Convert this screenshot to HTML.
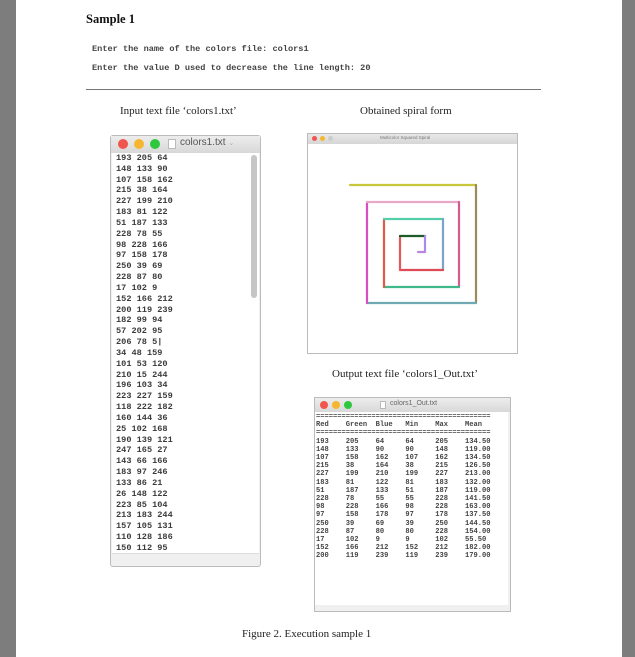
<!DOCTYPE html>
<html><head><meta charset="utf-8">
<style>
*{margin:0;padding:0;box-sizing:border-box}
body{width:635px;height:657px;background:#7d7d7d;position:relative;overflow:hidden;font-family:"Liberation Serif",serif}
.page{position:absolute;left:16px;top:0;width:606px;height:657px;background:#fff}
.a{position:absolute;white-space:pre}
.mono{font-family:"Liberation Mono","DejaVu Sans Mono",monospace;color:#333}
.cap{font-size:11px;color:#222}
.dot{position:absolute;border-radius:50%}
</style></head><body>
<div class="page"></div>
<div class="a" style="left:86px;top:12px;font-size:12.5px;font-weight:bold;color:#111">Sample 1</div>
<div class="a mono" style="left:92px;top:44px;font-size:8.6px;font-weight:bold;color:#444">Enter the name of the colors file: colors1</div>
<div class="a mono" style="left:92px;top:63px;font-size:8.6px;font-weight:bold;color:#444">Enter the value D used to decrease the line length: 20</div>
<div class="a" style="left:86px;top:89px;width:455px;height:1px;background:#777"></div>
<div class="a cap" style="left:120px;top:105px">Input text file ‘colors1.txt’</div>
<div class="a cap" style="left:360px;top:105px">Obtained spiral form</div>

<!-- left window -->
<div class="a" style="left:110px;top:135px;width:151px;height:432px;border:1px solid #bbb;background:#f0f0f0;border-radius:3px"></div>
<div class="a" style="left:111px;top:136px;width:149px;height:17px;background:linear-gradient(#ededed,#d8d8d8)"></div>
<div class="dot" style="left:118px;top:139px;width:10px;height:10px;background:#f0554f"></div>
<div class="dot" style="left:134px;top:139px;width:10px;height:10px;background:#f5b731"></div>
<div class="dot" style="left:150px;top:139px;width:10px;height:10px;background:#2ec840"></div>
<div class="a" style="left:168px;top:139px;width:8px;height:10px;border:1px solid #bbb;background:#fff"></div>
<div class="a" style="left:180px;top:137px;font-family:'Liberation Sans',sans-serif;font-size:10px;color:#555">colors1.txt <span style="color:#aaa;font-size:7px">⌄</span></div>
<div class="a" style="left:112px;top:153px;width:147px;height:401px;background:#fff;border-bottom:1px solid #ddd"></div>
<div class="a" style="left:251px;top:155px;width:6px;height:143px;background:#c6c6c6;border-radius:3px"></div>
<div class="a mono" style="left:116px;top:153px;font-size:8.6px;line-height:10.83px;font-weight:bold;color:#3a3a3a">193 205 64
148 133 90
107 158 162
215 38 164
227 199 210
183 81 122
51 187 133
228 78 55
98 228 166
97 158 178
250 39 69
228 87 80
17 102 9
152 166 212
200 119 239
182 99 94
57 202 95
206 78 5|
34 48 159
101 53 120
210 15 244
196 103 34
223 227 159
118 222 182
160 144 36
25 102 168
190 139 121
247 165 27
143 66 166
183 97 246
133 86 21
26 148 122
223 85 104
213 183 244
157 105 131
110 128 186
150 112 95</div>

<!-- spiral window -->
<div class="a" style="left:307px;top:133px;width:211px;height:221px;border:1px solid #bbb;background:#fff"></div>
<div class="a" style="left:308px;top:134px;width:209px;height:10px;background:linear-gradient(#e8e8e8,#d6d6d6)"></div>
<div class="dot" style="left:312px;top:136px;width:5px;height:5px;background:#f0554f"></div>
<div class="dot" style="left:320px;top:136px;width:5px;height:5px;background:#f5b731"></div>
<div class="dot" style="left:328px;top:136px;width:5px;height:5px;background:#ccc"></div>
<div class="a" style="left:380px;top:135px;font-family:'Liberation Sans',sans-serif;font-size:4.5px;color:#777">Multicolor Squared Spiral</div>
<svg class="a" style="left:0;top:0" width="635" height="657" fill="none" stroke-width="2.2" stroke-linecap="round">
<line x1="350" y1="185" x2="476" y2="185" stroke="#c8c63a"/>
<line x1="476" y1="185" x2="476" y2="303" stroke="#9c8a5c"/>
<line x1="476" y1="303" x2="367" y2="303" stroke="#6fa9b4"/>
<line x1="367" y1="303" x2="367" y2="202" stroke="#d94ec0"/>
<line x1="367" y1="202" x2="459" y2="202" stroke="#e8a9c7"/>
<line x1="459" y1="202" x2="459" y2="287" stroke="#d65a8e"/>
<line x1="459" y1="287" x2="384" y2="287" stroke="#3fb98a"/>
<line x1="384" y1="287" x2="384" y2="219" stroke="#e05a45"/>
<line x1="384" y1="219" x2="443" y2="219" stroke="#55cfa9"/>
<line x1="443" y1="219" x2="443" y2="270" stroke="#7aa4c8"/>
<line x1="443" y1="270" x2="400" y2="270" stroke="#de4a55"/>
<line x1="400" y1="270" x2="400" y2="236" stroke="#e05a58"/>
<line x1="400" y1="236" x2="425" y2="236" stroke="#1f5a2a"/>
<line x1="425" y1="236" x2="425" y2="252" stroke="#a98ae6"/>
<line x1="425" y1="252" x2="418" y2="252" stroke="#b986e0"/>
</svg>

<div class="a cap" style="left:332px;top:368px">Output text file ‘colors1_Out.txt’</div>

<!-- output window -->
<div class="a" style="left:314px;top:397px;width:197px;height:215px;border:1px solid #bbb;background:#f0f0f0"></div>
<div class="a" style="left:315px;top:398px;width:195px;height:14px;background:linear-gradient(#ededed,#d8d8d8)"></div>
<div class="dot" style="left:320px;top:401px;width:8px;height:8px;background:#f0554f"></div>
<div class="dot" style="left:332px;top:401px;width:8px;height:8px;background:#f5b731"></div>
<div class="dot" style="left:344px;top:401px;width:8px;height:8px;background:#2ec840"></div>
<div class="a" style="left:380px;top:401px;width:6px;height:8px;border:1px solid #bbb;background:#fff"></div>
<div class="a" style="left:390px;top:400px;font-family:'Liberation Sans',sans-serif;font-size:7px;color:#666">colors1_Out.txt</div>
<div class="a" style="left:315px;top:412px;width:193px;height:193px;background:#fff"></div>
<div class="a mono" style="left:316px;top:413px;font-size:7.1px;line-height:8.2px;font-weight:bold;color:#444">=========================================
Red    Green  Blue   Min    Max    Mean
=========================================
193    205    64     64     205    134.50
148    133    90     90     148    119.00
107    158    162    107    162    134.50
215    38     164    38     215    126.50
227    199    210    199    227    213.00
183    81     122    81     183    132.00
51     187    133    51     187    119.00
228    78     55     55     228    141.50
98     228    166    98     228    163.00
97     158    178    97     178    137.50
250    39     69     39     250    144.50
228    87     80     80     228    154.00
17     102    9      9      102    55.50
152    166    212    152    212    182.00
200    119    239    119    239    179.00</div>

<div class="a cap" style="left:242px;top:628px">Figure 2. Execution sample 1</div>
</body></html>
